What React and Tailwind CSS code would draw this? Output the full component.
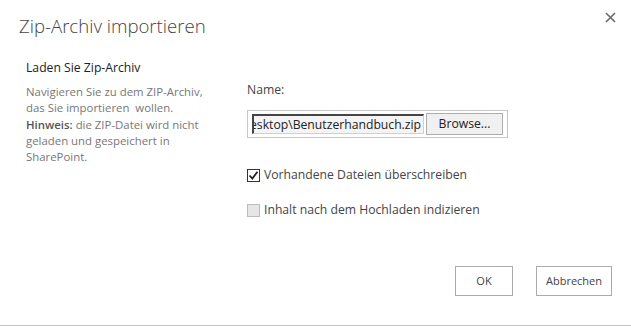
import React from 'react';

export default function App() {
  return (
    <div
      className="w-[631px] h-[326px] bg-white border-b border-[#c6c6c6] relative overflow-hidden"
      style={{ fontFamily: '"Open Sans", "Noto Sans", sans-serif' }}
    >
      <button className="absolute right-[14px] top-[10px] w-[14px] h-[14px] flex items-center justify-center">
        <svg width="11" height="11" viewBox="0 0 11 11">
          <path d="M1 1 L10 10 M10 1 L1 10" stroke="#6a6a6a" strokeWidth="1.6" />
        </svg>
      </button>

      <h1 className="absolute left-[19px] top-[12px] text-[18.6px] leading-[28px] font-light text-[#444]">
        Zip-Archiv importieren
      </h1>

      <div className="flex pt-[59px] pl-[26px]">
        <div className="w-[221px] pr-[10px]">
          <h2 className="text-[12.2px] leading-[18px] text-[#222]">Laden Sie Zip-Archiv</h2>
          <p className="mt-[7px] text-[11.4px] leading-[16.3px] text-[#777] whitespace-nowrap">
            Navigieren Sie zu dem ZIP-Archiv,
            <br />
            das Sie importieren&nbsp; wollen.
            <br />
            <b className="font-semibold text-[#555]">Hinweis:</b> die ZIP-Datei wird nicht
            <br />
            geladen und gespeichert in
            <br />
            SharePoint.
          </p>
        </div>

        <div className="flex flex-col pt-[22px]">
          <label className="text-[12.2px] leading-[18px] text-[#444]">Name:</label>
          <div className="mt-[11px] w-[261px] h-[28px] border border-[#c6c6c6] flex items-center pl-[4px] gap-[2px]">
            <div className="w-[172px] h-[20px] border-t-2 border-l-2 border-[#444] border-r border-b border-r-[#d0d0d0] border-b-[#d0d0d0] bg-[#f4f4f4] overflow-hidden flex items-center">
              <span className="text-[12.2px] leading-[18px] text-[#222] whitespace-nowrap ml-[-4px]">
                esktop\Benutzerhandbuch.zip
              </span>
            </div>
            <button className="w-[77px] h-[22px] border border-[#adadad] bg-[#f0f0f0] text-[12.2px] leading-[18px] text-[#222]">
              Browse...
            </button>
          </div>

          <label className="mt-[28px] flex items-center gap-[4px] text-[12.2px] leading-[18px] text-[#444]">
            <span className="w-[13px] h-[13px] border border-[#333] bg-white flex items-center justify-center">
              <svg width="11" height="11" viewBox="0 0 11 11">
                <path d="M1.5 5.5 L4.3 8.5 L9.5 1.8" fill="none" stroke="#222" strokeWidth="1.8" />
              </svg>
            </span>
            Vorhandene Dateien überschreiben
          </label>

          <label className="mt-[17px] flex items-center gap-[4px] text-[12.2px] leading-[18px] text-[#444]">
            <span className="w-[13px] h-[13px] border border-[#bcbcbc] bg-[#e6e6e6]" />
            Inhalt nach dem Hochladen indizieren
          </label>
        </div>
      </div>

      <div className="absolute right-[19px] top-[266px] flex gap-[23px]">
        <button className="w-[58px] h-[30px] border border-[#ababab] bg-white text-[11px] text-[#444]">OK</button>
        <button className="w-[76px] h-[30px] border border-[#ababab] bg-white text-[11px] text-[#444]">Abbrechen</button>
      </div>
    </div>
  );
}
